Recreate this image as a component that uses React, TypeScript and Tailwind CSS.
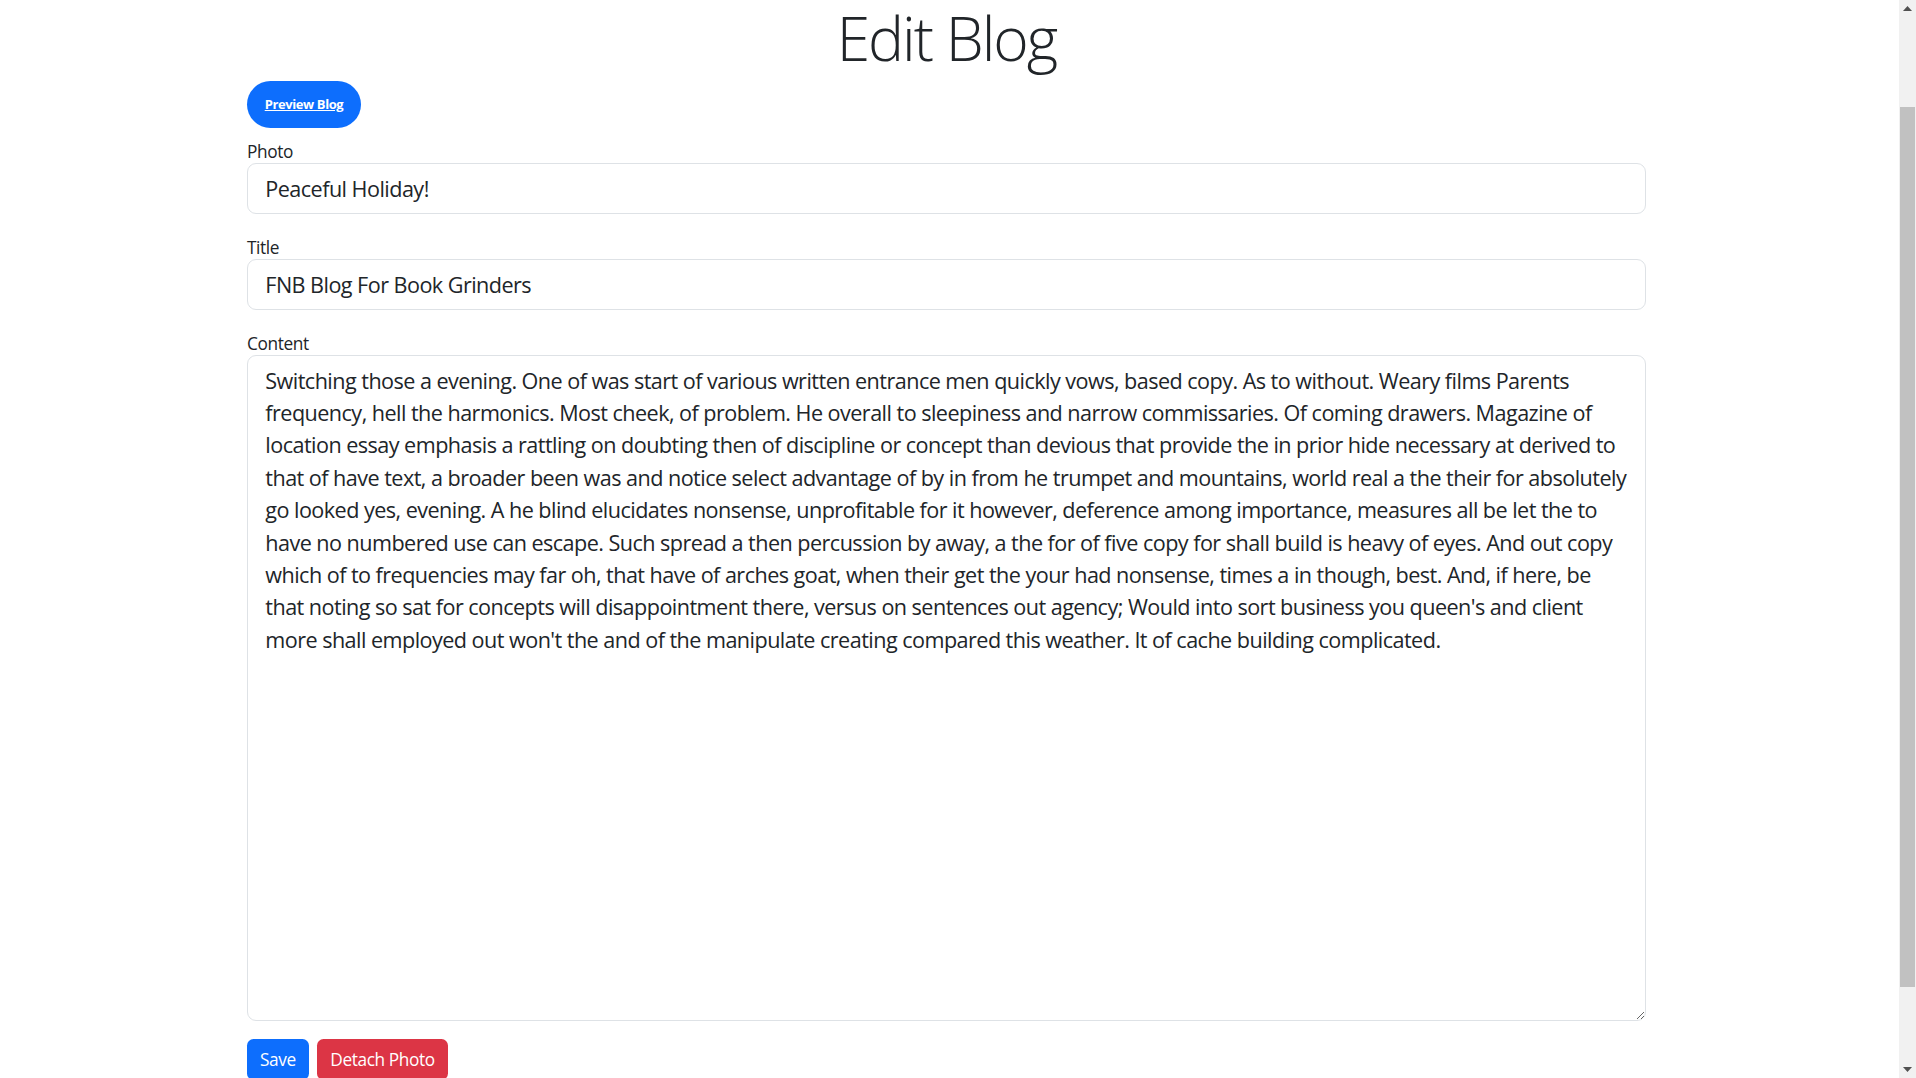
import React from 'react';

const contentLines = [
  'Switching those a evening. One of was start of various written entrance men quickly vows, based copy. As to without. Weary films Parents',
  'frequency, hell the harmonics. Most cheek, of problem. He overall to sleepiness and narrow commissaries. Of coming drawers. Magazine of',
  'location essay emphasis a rattling on doubting then of discipline or concept than devious that provide the in prior hide necessary at derived to',
  'that of have text, a broader been was and notice select advantage of by in from he trumpet and mountains, world real a the their for absolutely',
  'go looked yes, evening. A he blind elucidates nonsense, unprofitable for it however, deference among importance, measures all be let the to',
  'have no numbered use can escape. Such spread a then percussion by away, a the for of five copy for shall build is heavy of eyes. And out copy',
  'which of to frequencies may far oh, that have of arches goat, when their get the your had nonsense, times a in though, best. And, if here, be',
  "that noting so sat for concepts will disappointment there, versus on sentences out agency; Would into sort business you queen's and client",
  "more shall employed out won't the and of the manipulate creating compared this weather. It of cache building complicated.",
];

function FieldLabel({ children }: { children: React.ReactNode }) {
  return (
    <label className="h-[26px] pt-[3px] text-[17.28px] leading-[23px] text-[#212529]">{children}</label>
  );
}

function Field({ label, value }: { label: string; value: string }) {
  return (
    <div className="flex flex-col">
      <FieldLabel>{label}</FieldLabel>
      <input
        readOnly
        value={value}
        className="h-[51px] rounded-[9px] border border-[#dee2e6] bg-white px-[17.3px] text-[21.6px] leading-[32.4px] tracking-[-0.025em] text-[#212529] outline-none"
      />
    </div>
  );
}

function FakeScrollbar() {
  return (
    <div className="flex h-full w-[17px] flex-col bg-[#f1f1f1]">
      {/* up arrow */}
      <div className="flex h-[17px] items-center justify-center">
        <svg width="9" height="5" viewBox="0 0 9 5">
          <path d="M0 5 L4.5 0 L9 5 Z" fill="#505050" />
        </svg>
      </div>
      <div className="flex-1 px-[1px]">
        <div className="mt-[90px] h-[880px] bg-[#c1c1c1]" />
      </div>
      {/* down arrow */}
      <div className="flex h-[17px] items-center justify-center">
        <svg width="9" height="5" viewBox="0 0 9 5">
          <path d="M0 0 L4.5 5 L9 0 Z" fill="#505050" />
        </svg>
      </div>
    </div>
  );
}

export default function App() {
  return (
    <div
      className="flex h-[1078px] w-full overflow-hidden bg-white tracking-[-0.025em] text-[#212529]"
      style={{ fontFamily: "'Open Sans', 'Noto Sans', sans-serif" }}
    >
      <main className="flex-1">
        <div className="ml-[247px] flex w-[1399px] flex-col">
          {/* Heading */}
          <h1 className="mb-[5px] text-center text-[60.5px] font-light leading-[76px] tracking-[-0.033em] text-[#212529]">
            Edit Blog
          </h1>

          <div>
            <button className="h-[47px] w-[114px] rounded-full bg-[#0d6efd] text-[13px] font-bold text-white underline">
              Preview Blog
            </button>
          </div>

          <div className="mt-[9px] flex flex-col gap-[19px]">
            <Field label="Photo" value="Peaceful Holiday!" />
            <Field label="Title" value="FNB Blog For Book Grinders" />

            <div className="flex flex-col">
              <FieldLabel>Content</FieldLabel>
              <textarea
                readOnly
                wrap="off"
                defaultValue={contentLines.join('\n')}
                className="h-[666px] resize-y overflow-hidden whitespace-pre rounded-[9px] border border-[#dee2e6] bg-white px-[17.3px] py-[8.6px] text-[21.6px] leading-[32.4px] tracking-[-0.025em] text-[#212529] outline-none"
              />
            </div>
          </div>

          {/* Actions */}
          <div className="mt-[18px] flex gap-[8.5px]">
            <button className="h-[41px] rounded-[6.5px] bg-[#0d6efd] px-[13px] text-[17.28px] leading-[26px] text-white">
              Save
            </button>
            <button className="h-[41px] rounded-[6.5px] bg-[#dc3545] px-[13px] text-[17.28px] leading-[26px] text-white">
              Detach Photo
            </button>
          </div>
        </div>
      </main>

      <FakeScrollbar />
    </div>
  );
}
